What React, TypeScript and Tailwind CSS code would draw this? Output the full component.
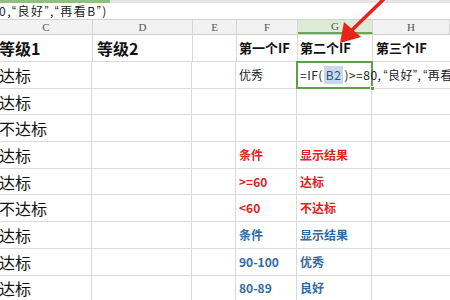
import React from "react"

const cols = ["C", "D", "E", "F", "G", "H"]
const widths = ["w-[93px]", "w-[100px]", "w-[44px]", "w-[61px]", "w-[75px]", "w-[77px]"]

type Cell = { text?: string; tone?: "red" | "blue" | "plain" }
type Row = { c: string; f?: Cell; g?: Cell }

const rows: Row[] = [
  { c: "达标", f: { text: "优秀", tone: "plain" } },
  { c: "达标" },
  { c: "不达标" },
  { c: "达标", f: { text: "条件", tone: "red" }, g: { text: "显示结果", tone: "red" } },
  { c: "达标", f: { text: ">=60", tone: "red" }, g: { text: "达标", tone: "red" } },
  { c: "不达标", f: { text: "<60", tone: "red" }, g: { text: "不达标", tone: "red" } },
  { c: "达标", f: { text: "条件", tone: "blue" }, g: { text: "显示结果", tone: "blue" } },
  { c: "达标", f: { text: "90-100", tone: "blue" }, g: { text: "优秀", tone: "blue" } },
  { c: "达标", f: { text: "80-89", tone: "blue" }, g: { text: "良好", tone: "blue" } },
]

const font = { fontFamily: '"Noto Sans CJK SC", "Liberation Sans", sans-serif' }
const q = { fontFamily: '"Liberation Sans", sans-serif' }

function toneClass(tone?: Cell["tone"]) {
  if (tone === "red") return "text-[#e3211f] font-bold"
  if (tone === "blue") return "text-[#2f6aa3] font-bold"
  return "text-[#222]"
}

function SmallCell({ cell, width }: { cell?: Cell; width: string }) {
  return (
    <div className={`${width} h-full shrink-0 border-r border-[#dadada] flex items-center pl-[3px] text-[12px] whitespace-nowrap ${toneClass(cell?.tone)}`}>
      {cell?.text}
    </div>
  )
}

export default function App() {
  return (
    <div className="relative w-[450px] h-[300px] overflow-hidden bg-white" style={font}>
      {/* toolbar strip */}
      <div className="flex h-[3px]">
        <div className="w-[110px] bg-[#8fc07c]" />
        <div className="flex-1 bg-[#e4e4e4]" />
      </div>

      {/* formula bar */}
      <div className="h-[17px] flex items-center border-b border-[#d2d2d2] text-[12px] text-[#222] whitespace-nowrap -ml-[1px] tracking-[1.5px]">
        0,<span style={q}>“</span>良好<span style={q}>”</span>,<span style={q}>“</span>再看B<span style={q}>”</span>)
      </div>

      {/* column headers */}
      <div className="flex h-[15px] bg-[#f2f2f2] border-b border-[#d0d0d0]">
        {cols.map((c, i) => (
          <div
            key={c}
            className={`${widths[i]} shrink-0 flex items-center justify-center text-[11px] text-[#555] border-r border-[#d6d6d6] ${
              c === "G" ? "bg-[#dcebd6] border-b-2 border-b-[#6aa84f]" : ""
            }`}
            style={{ fontFamily: '"Liberation Serif", serif' }}
          >
            {c}
          </div>
        ))}
      </div>

      {/* header row */}
      <div className="flex h-[27px] border-b border-[#dadada] font-bold">
        <div className="w-[93px] shrink-0 border-r border-[#dadada] flex items-center text-[16px] text-[#111] -indent-[1px]">等级1</div>
        <div className="w-[100px] shrink-0 border-r border-[#dadada] flex items-center pl-[4px] text-[16px] text-[#111]">等级2</div>
        <div className="w-[44px] shrink-0 border-r border-[#dadada]" />
        <div className="w-[61px] shrink-0 border-r border-[#dadada] flex items-center pl-[2px] text-[13px] text-[#111] whitespace-nowrap">第一个IF</div>
        <div className="w-[75px] shrink-0 border-r border-[#dadada] flex items-center pl-[2px] text-[13px] text-[#111] whitespace-nowrap">第二个IF</div>
        <div className="w-[77px] shrink-0 flex items-center pl-[3px] text-[13px] text-[#111] whitespace-nowrap">第三个IF</div>
      </div>

      {rows.map((r, idx) => (
        <div key={idx} className="flex h-[26.7px] border-b border-[#dadada]">
          <div className="w-[93px] shrink-0 border-r border-[#dadada] flex items-center text-[16px] text-[#111] -ml-[1px]">{r.c}</div>
          <div className="w-[100px] shrink-0 border-r border-[#dadada]" />
          <div className="w-[44px] shrink-0 border-r border-[#dadada]" />
          <SmallCell cell={r.f} width="w-[61px]" />
          {idx === 0 ? (
            <div className="relative w-[75px] shrink-0 h-full z-10">
              <div className="absolute -inset-y-[1px] -left-[1px] -right-[1px] border-2 border-[#5f9e4a]" />
              <div className="absolute left-[3px] top-0 h-full flex items-center text-[12px] text-[#222] whitespace-nowrap tracking-[0.5px]">
                =IF(<span className="bg-[#c9d9ec] text-[#2b4f82] px-[2px] mx-[1px]">B2</span>)&gt;=80,<span style={q} className="ml-[2px]">“</span>良好<span style={q}>”</span>,<span style={q} className="ml-[2px]">“</span>再看
              </div>
              <div className="absolute -right-[3px] -bottom-[3px] w-[5px] h-[5px] bg-[#5f9e4a] border border-white" />
            </div>
          ) : (
            <SmallCell cell={r.g} width="w-[75px]" />
          )}
          <div className="w-[77px] shrink-0" />
        </div>
      ))}

      {/* red arrow annotation */}
      <svg className="absolute left-0 top-0 pointer-events-none" width="450" height="300">
        <line x1="386" y1="-3" x2="352" y2="30" stroke="#e8231d" strokeWidth="3.5" strokeLinecap="round" />
        <polygon points="340,43 344,22 361,37" fill="#e8231d" />
      </svg>
    </div>
  )
}
